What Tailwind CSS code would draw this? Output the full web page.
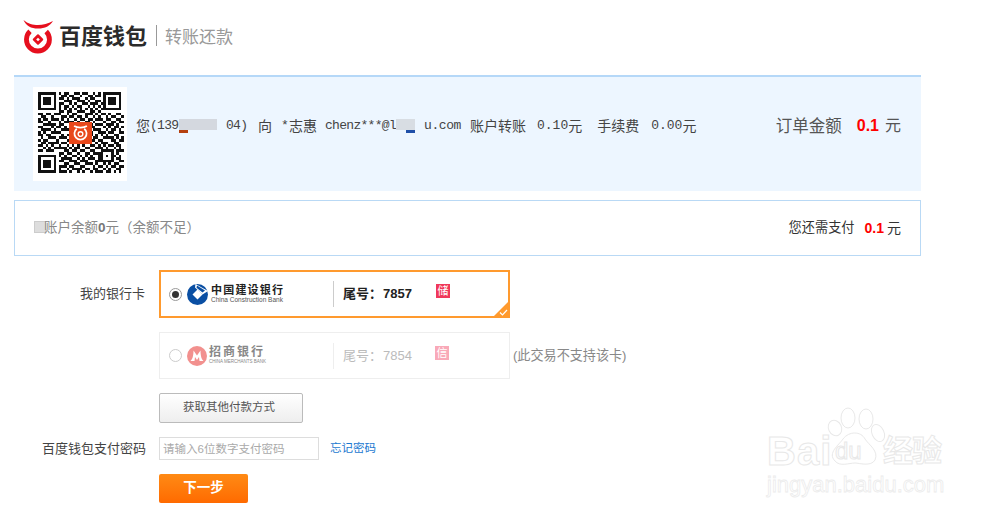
<!DOCTYPE html>
<html lang="zh-CN">
<head>
<meta charset="utf-8">
<title>百度钱包 转账还款</title>
<script src="https://cdn.jsdelivr.net/npm/@tailwindcss/browser@4"></script>
</head>
<body class="relative w-[1000px] h-[514px] overflow-hidden bg-white text-[#333] font-['Liberation_Sans','Noto_Sans_CJK_SC',sans-serif]">

<!-- 頁首 -->
<header class="h-[75px] pl-[23px] flex items-start">
  <svg class="mt-[19px] w-[30px] h-[35px]" viewBox="0 0 30 35">
    <path d="M0.500 1 C5 5 10 6 15 6 C20 6 25 4.500 30 2 C27 7 22 9.500 15 9.500 C8 9.500 3 7 0.500 1 Z" fill="#e60f1e"/>
    <path d="M7 12.200 A11.500 11.500 0 1 0 23.200 12.500" fill="none" stroke="#e60f1e" stroke-width="4.800"/>
    <rect x="11" y="16.500" width="8" height="8" rx="1" fill="#e60f1e" transform="rotate(45 15 20.500)"/>
    <rect x="13.700" y="19.200" width="2.600" height="2.600" fill="#fff" transform="rotate(45 15 20.500)"/>
  </svg>
  <span class="ml-[6px] mt-[21px] text-[22px] leading-[32px] font-bold text-[#2b2b2b]">百度钱包</span>
  <span class="ml-[9px] mt-[25px] w-px h-[21px] bg-[#999]"></span>
  <span class="ml-[8px] mt-[26px] text-[17px] leading-[24px] text-[#999]">转账还款</span>
</header>

<main class="ml-[14px] w-[907px]">
  <!-- 訂單資訊 -->
  <section class="h-[116px] border-t-2 border-[#b5d8f8] bg-[#edf6ff] pl-[19px] pt-[10px] flex items-start">
    <div class="w-[94px] h-[94px] bg-white p-[5px] relative shrink-0">
      <svg id="qr" class="w-[86px] h-[86px]" viewBox="0 0 33 33" shape-rendering="crispEdges"></svg>
      <div class="absolute left-[36px] top-[35px] w-[23px] h-[22px] bg-[#e8481c] flex items-center justify-center">
        <svg class="w-[15px] h-[16px]" viewBox="0 0 14 15"><path d="M1 1 C4 3 10 3 13 1 M3.500 3.500 A5.700 5.700 0 1 0 10.500 3.500" fill="none" stroke="#fff" stroke-width="1.600"/><circle cx="7" cy="8.500" r="2.200" fill="none" stroke="#fff" stroke-width="1.300"/></svg>
      </div>
    </div>
    <div class="ml-[9px] mt-[29px] h-[20px] flex items-center text-[14px] whitespace-nowrap text-[#444]">
      <span class="w-[14px]">您</span><span class="font-['Liberation_Mono',monospace] text-[13px] tracking-[-0.700px] w-[29px]">(139</span>
      <span class="relative w-[38px] h-[11px] bg-[#d4d8df] -mt-[3px]"><span class="absolute left-0 -bottom-[3px] w-[9px] h-[3px] bg-[#b5400f]"></span></span>
      <span class="ml-[9px] font-['Liberation_Mono',monospace] text-[13px] tracking-[-0.700px] w-[21px]">04)</span>
      <span class="ml-[11px] w-[14px]">向</span>
      <span class="ml-[9px] font-['Liberation_Mono',monospace] text-[13px] w-[8px]">*</span><span>志惠</span>
      <span class="ml-[8px] font-['Liberation_Mono',monospace] text-[13px] tracking-[-0.700px] w-[71px]">chenz***@l</span>
      <span class="relative w-[19px] h-[11px] bg-[#d8dde3] -mt-[3px]"><span class="absolute right-0 -bottom-[3px] w-[9px] h-[3px] bg-[#1f4fa8]"></span></span>
      <span class="ml-[9px] font-['Liberation_Mono',monospace] text-[13px] tracking-[-0.400px] w-[37px]">u.com</span>
      <span class="ml-[9px]">账户转账</span>
      <span class="ml-[11px] font-['Liberation_Mono',monospace] text-[13px]">0.10</span><span>元</span>
      <span class="ml-[15px]">手续费</span>
      <span class="ml-[12px] font-['Liberation_Mono',monospace] text-[13px]">0.00</span><span>元</span>
    </div>
    <div class="ml-auto mr-[20px] mt-[27px] h-[24px] flex items-center whitespace-nowrap text-[16.500px] leading-[24px] text-[#555]">
      <span>订单金额</span><span class="ml-[15px] text-[16px] font-bold text-[#ff0000]">0.1</span><span class="ml-[6px] text-[16px]">元</span>
    </div>
  </section>

  <!-- 餘額 -->
  <section class="mt-[9px] h-[56px] border border-[#b9d9f5] pl-[19px] pr-[19px] flex items-center justify-between">
    <div class="flex items-center text-[13.500px] text-[#888] whitespace-nowrap">
      <span class="w-[12px] h-[12px] bg-[#ddd] border border-[#ccc] -mt-[3px]"></span>
      <span class="-ml-[2px]">账户余额<b class="text-[#777]">0</b>元（余额不足）</span>
    </div>
    <div class="flex items-center text-[13.200px] text-[#333] whitespace-nowrap">
      <span>您还需支付</span><span class="ml-[10px] text-[14px] font-bold text-[#ff0000]">0.1</span><span class="ml-[3px] text-[14px]">元</span>
    </div>
  </section>

  <!-- 銀行卡 -->
  <section class="mt-[14px]">
    <div class="flex items-center h-[48px]">
      <label class="w-[131px] text-right text-[13px] text-[#444]">我的银行卡</label>
      <div class="relative ml-[14px] w-[351px] h-[48px] border-2 border-[#ff9a2e] flex items-center pl-[8px] overflow-hidden">
        <span class="w-[13px] h-[13px] rounded-full border border-[#999] flex items-center justify-center"><span class="w-[7px] h-[7px] rounded-full bg-[#333]"></span></span>
        <svg class="ml-[5px] w-[21px] h-[21px]" viewBox="0 0 21 21">
          <circle cx="10.500" cy="10.500" r="10.500" fill="#0a4fa3"/>
          <path d="M10.500 5.500 L15.500 10.500 L10.500 15.500 L5.500 10.500 Z" fill="#fff"/>
          <path d="M8.500 0 L21 7 L15.500 10.500 L8 3.500 Z" fill="#fff"/>
          <path d="M10 1.500 L18 6.500 L15.500 8.500 L9.500 3.800 Z" fill="#0a4fa3"/>
        </svg>
        <div class="ml-[3px] w-[73px] flex flex-col whitespace-nowrap text-[#222]">
          <span class="text-[11px] leading-[11px] font-bold tracking-[1.200px]">中国建设银行</span>
          <span class="text-[6.500px] leading-[8px] text-[#555]">China Construction Bank</span>
        </div>
        <span class="ml-[49px] w-px h-[26px] bg-[#ccc]"></span>
        <span class="ml-[9px] text-[13px] font-bold text-[#222] whitespace-nowrap">尾号：<span class="ml-px">7857</span></span>
        <span class="absolute left-[275px] top-[12px] w-[14px] h-[14px] bg-[#f0385a] text-white text-[11px] leading-[14px] text-center">储</span>
        <span class="absolute right-0 bottom-0 w-0 h-0 border-l-[14px] border-l-transparent border-b-[14px] border-b-[#ff9a2e]"></span>
        <svg class="absolute right-0 bottom-0 w-[9px] h-[7px]" viewBox="0 0 9 7"><path d="M1 3.500 L3.500 6 L8 1" fill="none" stroke="#fff" stroke-width="1.200"/></svg>
      </div>
    </div>

    <div class="flex items-center h-[47px] mt-[14px] pl-[145px]">
      <div class="relative w-[351px] h-[47px] border border-[#eee] flex items-center pl-[9px]">
        <span class="w-[13px] h-[13px] rounded-full border border-[#ccc]"></span>
        <svg class="ml-[5px] w-[20px] h-[20px]" viewBox="0 0 20 20">
          <circle cx="10" cy="10" r="10" fill="#f2908e"/>
          <path d="M3.500 15 C6 13 6.500 8 6.500 4.500 L10 9.500 L13.500 4.500 C13.500 8 14 13 16.500 15 L12.500 15 L12 11 L10 14 L8 11 L7.500 15 Z" fill="#fff"/>
        </svg>
        <div class="ml-[2px] w-[55px] flex flex-col whitespace-nowrap text-[#888]">
          <span class="text-[12px] leading-[13px] font-bold tracking-[2px]">招商银行</span>
          <span class="text-[4.500px] leading-[6px]">CHINA MERCHANTS BANK</span>
        </div>
        <span class="ml-[69px] w-px h-[26px] bg-[#eee]"></span>
        <span class="ml-[9px] text-[13px] text-[#bbb] whitespace-nowrap">尾号：<span class="ml-px">7854</span></span>
        <span class="absolute left-[275px] top-[13px] w-[14px] h-[14px] bg-[#f9a9b8] text-white text-[11px] leading-[14px] text-center">信</span>
      </div>
      <span class="ml-[3px] text-[13.100px] text-[#888] whitespace-nowrap">(此交易不支持该卡)</span>
    </div>

    <div class="pl-[145px] mt-[14px]">
      <button class="block w-[144px] h-[30px] pr-[4px] rounded-[2px] border border-[#bbb] bg-gradient-to-b from-white to-[#eee] text-[11.500px] text-[#555]">获取其他付款方式</button>
    </div>

    <div class="flex items-center h-[23px] mt-[14px]">
      <label class="w-[132px] text-right text-[13px] text-[#444] whitespace-nowrap">百度钱包支付密码</label>
      <input class="ml-[13px] w-[160px] h-[23px] border border-[#ddd] px-[3px] text-[11.500px] outline-none placeholder:text-[#aaa]" placeholder="请输入6位数字支付密码">
      <a class="ml-[11px] text-[11.500px] text-[#1a78d0] whitespace-nowrap">忘记密码</a>
    </div>

    <div class="pl-[145px] mt-[14px]">
      <button class="block w-[89px] h-[29px] rounded-[2px] bg-gradient-to-b from-[#ff8a14] to-[#ff6a00] text-[13.500px] font-bold text-white">下一步</button>
    </div>
  </section>
</main>

<!-- 浮水印 -->
<div class="absolute left-[767px] top-[407px] w-[190px] h-[90px] text-white pointer-events-none">
  <svg class="absolute left-[60px] top-0 w-[72px] h-[60px]" viewBox="0 0 72 60" fill="#fff" stroke="#e9e9e9" stroke-width="1">
    <ellipse cx="8" cy="21" rx="6.500" ry="8" transform="rotate(-25 8 21)"/>
    <ellipse cx="21" cy="11" rx="7" ry="10"/>
    <ellipse cx="39" cy="12" rx="7" ry="10"/>
    <ellipse cx="51" cy="26" rx="6" ry="9" transform="rotate(-25 51 26)"/>
    <path d="M8 54 C0 46 12 38 16 32 C22 24 34 24 38 32 C42 38 52 44 48 53 C44 60 32 56 28 56 C22 56 13 60 8 54 Z"/>
  </svg>
  <span class="absolute left-0 top-[22px] text-[40px] leading-[44px] font-bold tracking-[1px] [-webkit-text-stroke:1px_#e8e8e8]">Bai</span>
  <span class="absolute left-[68px] top-[31px] text-[24px] leading-[26px] [-webkit-text-stroke:1px_#e8e8e8]">du</span>
  <span class="absolute left-[116px] top-[27px] text-[30px] leading-[34px] font-bold tracking-[-1px] [-webkit-text-stroke:1px_#e8e8e8]">经验</span>
  <span class="absolute left-0 top-[65px] text-[22px] leading-[26px] whitespace-nowrap [-webkit-text-stroke:0.800px_#ececec]">jingyan.baidu.com</span>
</div>

<script>
  // 二維碼的碼點，只求外觀相近
  var rows = [
    "111111101011001101100101011111110",
    "100000100110110010011011010000010",
    "101110101101011100101100010111010",
    "101110100011100111010011010111010",
    "101110101100101001101110110111010",
    "100000101011010110010101010000010",
    "111111101010101010101010111111110",
    "000000001101100111001101000000000",
    "110110111001011000111010110100110",
    "011001000110110110100101001011001",
    "101101110101001011011011101100110",
    "110010001011110100110100010011011",
    "001111101100100000001011101110100",
    "110001011010100000001100010101101",
    "011110100111000000000111001011010",
    "101001111000100000001001110110011",
    "110110000101100000001010101001100",
    "010011101110100000000110011110101",
    "101100010001100000001101100011011",
    "011011110110111010110010111001100",
    "110101001001010101001101010110110",
    "001010111110101100110011101001010",
    "110111000011011011001100111110111",
    "000000001101100100110111100010100",
    "111111101010011010101001101011010",
    "100000100111100101011101100010110",
    "101110101100111011100011111110011",
    "101110100011001100111010010101100",
    "101110101110110011000101101011011",
    "100000101001011110110110010100110",
    "111111101110100101001011101101010",
    "000000000000000000000000000000000",
    "000000000000000000000000000000000"
  ];
  var svgNs = "http://www.w3.org/2000/svg";
  var qr = document.getElementById("qr");
  rows.forEach(function (row, y) {
    for (var x = 0; x < row.length; x++) {
      if (row[x] === "1") {
        var r = document.createElementNS(svgNs, "rect");
        r.setAttribute("x", x);
        r.setAttribute("y", y);
        r.setAttribute("width", 1);
        r.setAttribute("height", 1);
        r.setAttribute("fill", "#111");
        qr.appendChild(r);
      }
    }
  });
</script>
</body>
</html>
